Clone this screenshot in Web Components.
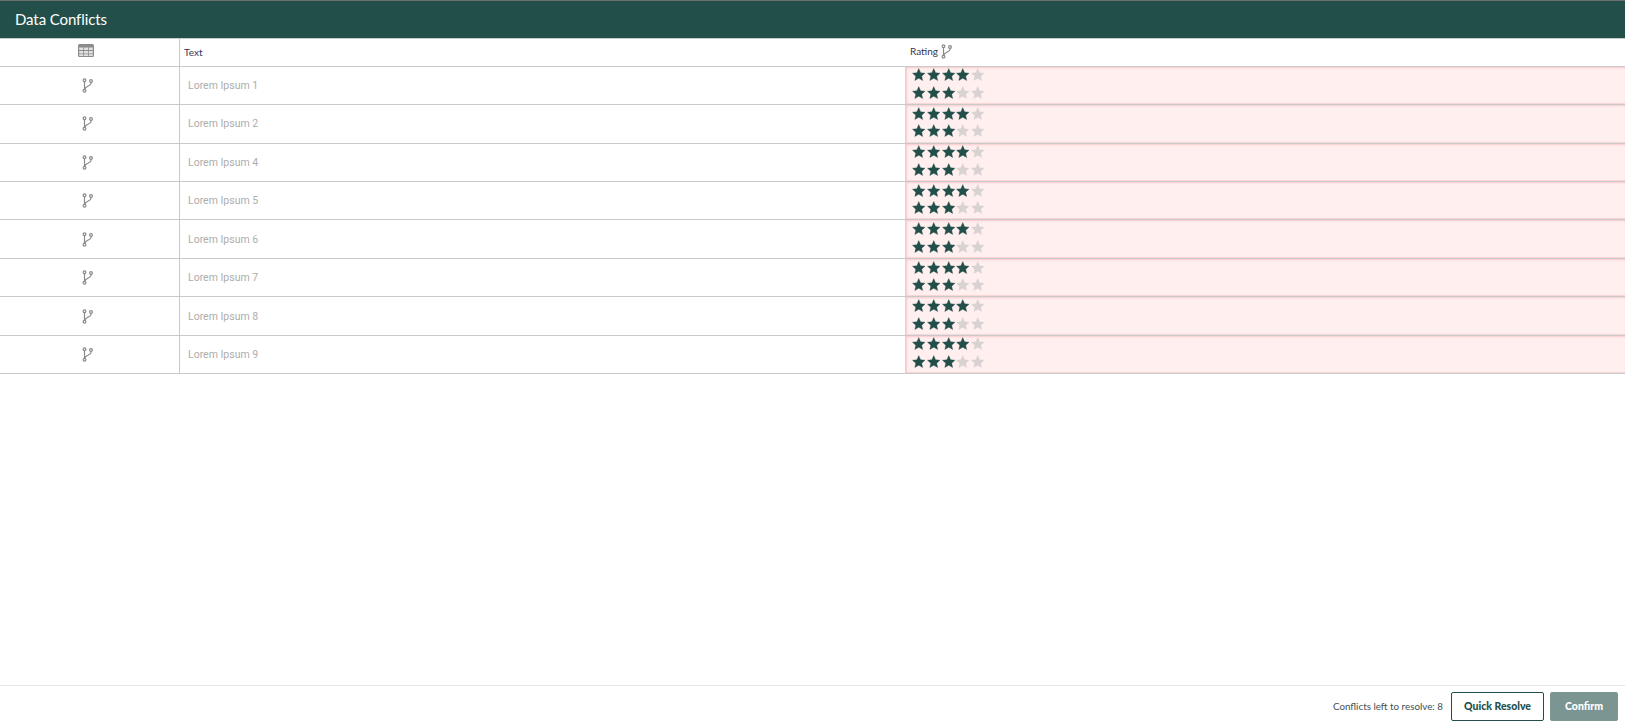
<!DOCTYPE html>
<html><head><meta charset="utf-8"><style>
html,body{margin:0;height:100%;background:#fff;overflow:hidden}
body{font-family:"Roboto","Liberation Sans",sans-serif}
</style></head><body>
<conflict-app></conflict-app>
<script>
const branch=()=>`<svg width="11" height="15" viewBox="0 0 11 15" fill="none" stroke="#8a8a8a" stroke-width="1.2"><circle cx="2.500" cy="2.300" r="1.400"/><circle cx="2.500" cy="12.700" r="1.400"/><circle cx="9" cy="3" r="1.400"/><path d="M2.500 3.700V11.300M9 4.400V5.500C9 8 3.200 8 2.700 11.300"/></svg>`;
const star=c=>`<svg width="13.500" height="13.500" viewBox="0 0 24 24"><path fill="${c}" stroke="${c}" stroke-width=".6" d="M12 1l3.300 7.300 7.900.9-5.900 5.300 1.700 7.800L12 18.300 5 22.300l1.700-7.800L.8 9.200l7.900-.9z"/></svg>`;
class StarRating extends HTMLElement{connectedCallback(){
 const n=+this.getAttribute('value');
 this.attachShadow({mode:'open'}).innerHTML=`<style>:host{display:flex;gap:1.250px}svg{display:block}</style>`+[0,1,2,3,4].map(i=>star(i<n?'#234f4a':'#d8d2d2')).join('');
}}
customElements.define('star-rating',StarRating);
class ConflictRow extends HTMLElement{connectedCallback(){
 this.attachShadow({mode:'open'}).innerHTML=`<style>
 :host{display:grid;grid-template-columns:180px 725px 1fr;height:38.450px;box-sizing:border-box;border-bottom:1px solid #c9c9c9}
 .a{display:flex;align-items:center;justify-content:center;border-right:1px solid #c9c9c9;padding-right:4px}
 .b{display:flex;align-items:center;padding-left:8px;font:400 10.500px Roboto,sans-serif;color:#adadad}
 .c{background:#fff0ef;box-shadow:inset 2px 1px 2px #f8c9cb,inset 0 -1px 1px #f8d5d6;display:flex;flex-direction:column;justify-content:center;gap:4.200px;padding-left:7px;padding-bottom:3px}
 svg{display:block}
 </style><div class="a">${branch()}</div><div class="b"><slot></slot></div><div class="c"><star-rating value="4"></star-rating><star-rating value="3"></star-rating></div>`;
}}
customElements.define('conflict-row',ConflictRow);
class ConflictApp extends HTMLElement{connectedCallback(){
 const rows=[1,2,4,5,6,7,8,9].map(n=>`<conflict-row>Lorem Ipsum ${n}</conflict-row>`).join('');
 this.attachShadow({mode:'open'}).innerHTML=`<style>
 :host{display:flex;flex-direction:column;height:727px}
 .title{background:#234f4a;border-top:1px solid #6e6e6e;color:#fff;font:15px Lato,sans-serif;letter-spacing:-.1px;display:flex;align-items:center;padding:0 0 2px 15px;box-sizing:border-box;flex:none;border-bottom:1px solid #c9c9c9;height:39px}
 .head{display:grid;grid-template-columns:180px 725px 1fr;height:27.700px;box-sizing:border-box;border-bottom:1px solid #c9c9c9;flex:none}
 .head>div{display:flex;align-items:center;padding-bottom:1px}
 .head>.h1{justify-content:center;border-right:1px solid #c9c9c9;padding-right:8px;padding-bottom:3px}
 .h2,.h3{padding-left:4px;font:10px Lato,sans-serif;color:#3a3550}
 .head>.h3{gap:3px;padding-left:5px;padding-bottom:2px}
 .body{flex:1}
 .foot{height:42px;box-sizing:border-box;flex:none;border-top:1px solid #e6e6e6;display:flex;align-items:center;justify-content:flex-end;padding:0 7px 0 0;gap:6px;font:9.800px Lato,sans-serif;color:#3f4f50}
 .left{margin-right:2px;margin-top:-2px}
 button{height:29px;box-sizing:border-box;border-radius:2px;font:900 10.500px Lato,sans-serif;padding:0 0 2px}
 .q{width:93px;background:#fff;border:1px solid #234f4a;color:#234f4a}
 .c{width:68px;background:#7b9592;border:1px solid #7b9592;color:#fff}
 svg{display:block}
 </style>
 <div class="title">Data Conflicts</div>
 <div class="head"><div class="h1"><svg width="16" height="13" viewBox="0 0 16 13"><rect width="16" height="13" rx="1.500" fill="#8c8c8c"/><path fill="#e2e2e2" d="M1.200 3.500h4v2.500h-4zM6 3.500h4v2.500H6zM10.800 3.500h4v2.500h-4zM1.200 7h4v2.500h-4zM6 7h4v2.500H6zM10.800 7h4v2.500h-4zM1.200 10.300h4v1.700h-4zM6 10.300h4v1.700H6zM10.800 10.300h4v1.700h-4z"/></svg></div><div class="h2">Text</div><div class="h3">Rating ${branch()}</div></div>
 <div class="body">${rows}</div>
 <div class="foot"><span class="left">Conflicts left to resolve: 8</span><button class="q">Quick Resolve</button><button class="c">Confirm</button></div>`;
}}
customElements.define('conflict-app',ConflictApp);
</script></body></html>
